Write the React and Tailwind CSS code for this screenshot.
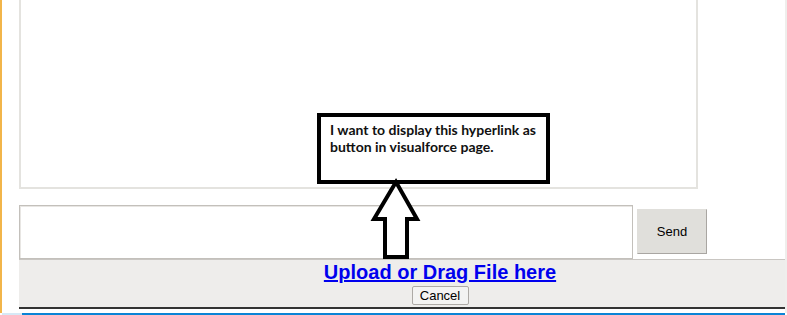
import React from "react";

const App = () => {
  return (
    <div className="relative w-[787px] h-[315px] overflow-hidden bg-white flex font-['Liberation_Sans',Arial,sans-serif]">
      {/* left accent bar */}
      <div className="w-[2px] h-[313px] bg-[#f2b54a]" />

      <div className="flex-1 flex flex-col">
        <div className="pl-[17px]">
          {/* message history box */}
          <div className="w-[679px] h-[189px] border-2 border-t-0 border-[#e4e3df] bg-white" />

          {/* compose row */}
          <div className="flex items-start mt-[16px]">
            <div className="w-[614px] h-[54px] border border-[#c3c0bb] shadow-[inset_1px_1px_0_#e8e6e3] bg-white" />
            <button className="ml-[4px] mt-[4px] w-[70px] h-[45px] bg-[#e0dfdb] border border-[#e0dfdb] border-r-[#a9a6a2] border-b-[#a9a6a2] text-[13px] text-black">
              Send
            </button>
          </div>

          {/* upload panel */}
          <div className="h-[50px] bg-[#eeedeb] border-t border-[#c9c6c2] border-b-2 border-b-[#333333] flex flex-col items-center pl-[76px]">
            <a
              href="#"
              className="mt-[1px] text-[20px] leading-[22px] font-bold text-[#0000ee] underline"
            >
              Upload or Drag File here
            </a>
            <button className="mt-[3px] w-[57px] h-[19px] bg-[#f3f3f2] border border-[#adaaa6] rounded-[2px] text-[13px] leading-[17px] text-black">
              Cancel
            </button>
          </div>
        </div>

        <div className="flex-1" />
        {/* bottom blue rule */}
        <div className="flex h-[2px]">
          <div className="w-[20px] bg-[#d6e9f6]" />
          <div className="flex-1 bg-[#0a84d6]" />
        </div>
      </div>

      {/* right edge strip */}
      <div className="w-[2px] h-[313px] bg-[#efeeec]" />

      {/* annotation callout */}
      <div className="absolute left-[317px] top-[113px] w-[233px] h-[71px] border-4 border-black bg-white pl-[9px] pt-[4px] font-['Lato','Open_Sans',sans-serif] font-bold text-[14px] leading-[17px] text-[#111]">
        I want to display this hyperlink as
        <br />
        button in visualforce page.
      </div>

      {/* annotation arrow */}
      <svg
        className="absolute left-[370px] top-[178px]"
        width="52"
        height="84"
        viewBox="0 0 52 84"
      >
        <path
          d="M26 4 L47 41 L37 41 L37 79 L15 79 L15 41 L4 41 Z"
          fill="white"
          stroke="black"
          strokeWidth="4"
          strokeLinejoin="miter"
        />
      </svg>
    </div>
  );
};

export default App;
